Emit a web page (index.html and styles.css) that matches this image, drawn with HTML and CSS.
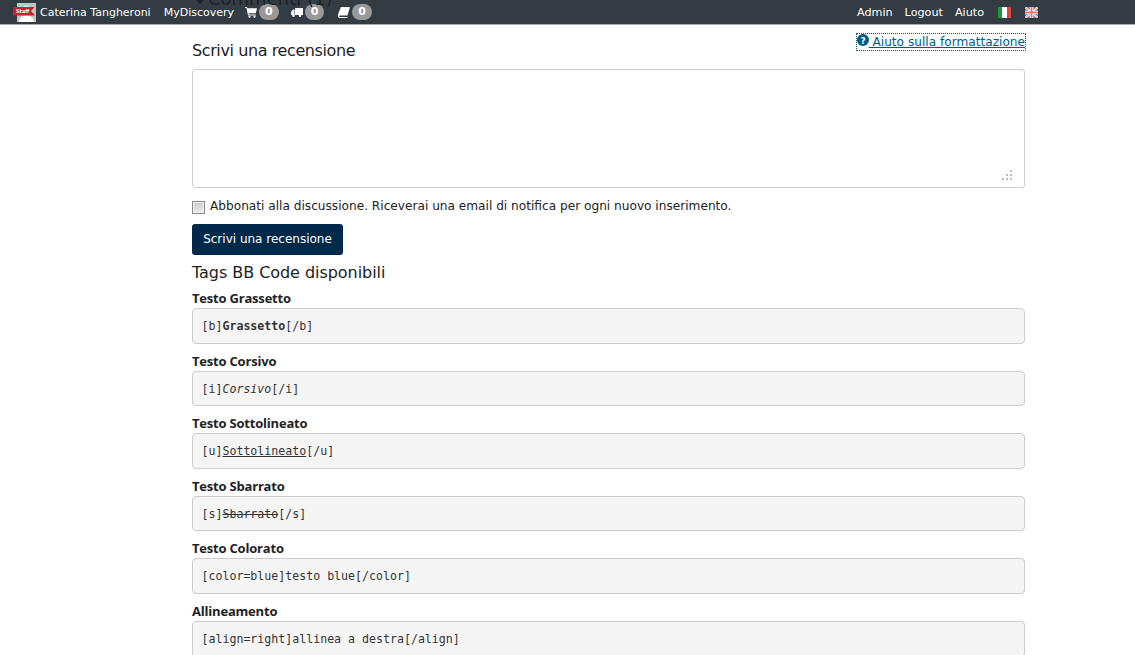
FILE: index.html
```html
<!DOCTYPE html>
<html lang="it">
<head>
<meta charset="utf-8">
<title>Scrivi una recensione</title>
<link rel="stylesheet" href="styles.css">
</head>
<body>
<nav class="topbar">
  <div class="nav-group">
    <span class="avatar">
      <svg width="19" height="19" viewBox="0 0 19 19"><rect width="19" height="19" fill="#c4c4c4"/><circle cx="9.500" cy="7" r="4.500" fill="#e4e4e4"/><path d="M2 19c.5-5 4-6.500 7.500-6.500S16.500 14 17 19z" fill="#fff"/></svg>
      <span class="ribbon"><span class="ribbon-text">Staff</span></span>
    </span>
    <a class="nav-link name">Caterina Tangheroni</a>
    <a class="nav-link discovery">MyDiscovery</a>
    <span class="counter"><svg class="ico" width="12" height="12" viewBox="0 0 12 12"><path d="M0 1h2l.5 1.200H12l-1.200 5H3.500l.3 1.300h7v1H3L1.500 2H0z" fill="#fff"/><circle cx="4.500" cy="10.800" r="1.100" fill="#fff"/><circle cx="9.500" cy="10.800" r="1.100" fill="#fff"/></svg><b class="badge">0</b></span>
    <span class="counter wide"><svg class="ico" width="12" height="12" viewBox="0 0 12 12"><path d="M4 2h8v7H4zM0 6l2-2.500h1.500V9H0z" fill="#fff"/><circle cx="2.500" cy="9.800" r="1.200" fill="#fff"/><circle cx="9" cy="9.800" r="1.200" fill="#fff"/></svg><b class="badge">0</b></span>
    <span class="counter"><svg class="ico" width="12" height="12" viewBox="0 0 12 12"><path d="M3 1h9L9.500 9.500H2c-1 0-1 1.500 0 1.500h7.500l-.3 1H1.500C-.5 12-.3 9 .5 7z" fill="#fff"/></svg><b class="badge">0</b></span>
  </div>
  <div class="nav-group right">
    <a class="nav-link">Admin</a>
    <a class="nav-link">Logout</a>
    <a class="nav-link">Aiuto</a>
    <span class="flag it"><i></i><i></i><i></i></span>
    <svg class="flag-uk" width="13" height="11" viewBox="0 0 13 11"><rect width="13" height="11" fill="#5b7fc4"/><path d="M0 0l13 11M13 0L0 11" stroke="#fff" stroke-width="2"/><path d="M0 0l13 11M13 0L0 11" stroke="#e8776d" stroke-width=".8"/><path d="M6.500 0v11M0 5.500h13" stroke="#fff" stroke-width="3.500"/><path d="M6.500 0v11M0 5.500h13" stroke="#e8776d" stroke-width="1.800"/></svg>
  </div>
</nav>

<main class="content">
  <div class="behind"><span class="caret"></span>Commenti (1)</div>
  <div class="head-row">
    <h2 class="title">Scrivi una recensione</h2>
    <a class="help"><svg width="12" height="12" viewBox="0 0 12 12"><circle cx="6" cy="6" r="6" fill="#005a87"/><text x="6" y="9.500" text-anchor="middle" class="help-q">?</text></svg> Aiuto sulla formattazione</a>
  </div>
  <div class="textarea">
    <svg class="grip" width="12" height="12" viewBox="0 0 12 12"><g fill="#bbb"><rect x="9" y="0" width="2" height="2"/><rect x="5" y="4" width="2" height="2"/><rect x="9" y="4" width="2" height="2"/><rect x="1" y="8" width="2" height="2"/><rect x="5" y="8" width="2" height="2"/><rect x="9" y="8" width="2" height="2"/></g></svg>
  </div>
  <label class="check"><span class="box"></span><span class="check-text">Abbonati alla discussione. Riceverai una email di notifica per ogni nuovo inserimento.</span></label>
  <button class="submit">Scrivi una recensione</button>
  <h3 class="subtitle">Tags BB Code disponibili</h3>

  <p class="tag-label first">Testo Grassetto</p>
  <pre class="code">[b]<strong>Grassetto</strong>[/b]</pre>
  <p class="tag-label">Testo Corsivo</p>
  <pre class="code">[i]<em>Corsivo</em>[/i]</pre>
  <p class="tag-label">Testo Sottolineato</p>
  <pre class="code">[u]<u>Sottolineato</u>[/u]</pre>
  <p class="tag-label">Testo Sbarrato</p>
  <pre class="code">[s]<s>Sbarrato</s>[/s]</pre>
  <p class="tag-label">Testo Colorato</p>
  <pre class="code">[color=blue]testo blue[/color]</pre>
  <p class="tag-label">Allineamento</p>
  <pre class="code">[align=right]allinea a destra[/align]</pre>
</main>
</body>
</html>
```

FILE: styles.css
```css
* { box-sizing: border-box; }
html, body { margin: 0; height: 655px; overflow: hidden; background: #fff; }
body { font-family: "DejaVu Sans", sans-serif; color: #222; font-size: 13px; }
.topbar {
  position: fixed; top: 0; left: 0; right: 0; z-index: 5; height: 25px;
  background: #333c43; border-bottom: 1px solid #aaa;
  display: flex; justify-content: space-between; align-items: center;
  padding: 0 97px 0 17px;
}
.nav-group { display: flex; align-items: center; }
.nav-link { color: #fff; font-size: 11px; margin-right: 11px; white-space: nowrap; }
.name { margin-left: 4px; margin-right: 13px; }
.discovery { margin-right: 11px; }
.avatar { display: block; width: 19px; height: 19px; position: relative; }
.avatar svg { display: block; }
.ribbon { position: absolute; left: -4px; top: 4px; width: 22px; height: 9px; background: #c8202c; clip-path: polygon(0 0, 100% 0, 82% 50%, 100% 100%, 0 100%); display: flex; align-items: center; padding-left: 3px; }
.ribbon-text { color: #fff; font: bold 5px/9px "DejaVu Sans", sans-serif; }
.counter { display: flex; align-items: center; margin-right: 12px; }
.counter.wide { margin-right: 14px; }
.ico { margin-right: 2px; }
.badge { background: #999; color: #fff; font-size: 11px; border-radius: 10px; padding: 0 6px; line-height: 16px; height: 16px; }
.right .nav-link { font-size: 11.2px; margin-right: 12px; }
.flag { display: flex; width: 13px; height: 11px; margin-left: 2px; margin-right: 14px; }
.flag i { flex: 1; }
.flag i:nth-child(1) { background: #1a9a3a; }
.flag i:nth-child(2) { background: #fff; }
.flag i:nth-child(3) { background: #d9493e; }
.content { width: 833px; margin-left: 192px; }
.behind { position: relative; z-index: 6; height: 33px; font-size: 18px; line-height: 20px; margin-top: -11px; margin-bottom: 11px; color: #1d2226; display: flex; align-items: flex-start; }
.caret { width: 0; height: 0; border-left: 7px solid transparent; border-right: 7px solid transparent; border-top: 8px solid #1d2226; margin: 7px 1px 0 1px; }
.head-row { display: flex; justify-content: space-between; align-items: flex-start; height: 36px; }
.title { font-size: 16px; letter-spacing: -.4px; font-weight: 400; margin: 8px 0 0; }
.help { font-size: 12.15px; color: #005a87; text-decoration: underline; outline: 1px dotted #005a87; white-space: nowrap; line-height: 15px; margin-top: 1px; }
.help-q { font: bold 9px "DejaVu Sans", sans-serif; fill: #fff; }
.textarea { height: 119px; border: 1px solid #ccc; border-radius: 3px; position: relative; }
.grip { position: absolute; right: 11px; bottom: 5px; }
.check { display: flex; align-items: center; margin-top: 8px; height: 18px; font-size: 12.15px; }
.check-text { position: relative; top: 1px; }
.box { width: 13px; height: 13px; border: 1px solid #8a8a8a; box-shadow: inset 0 0 0 1px #f2f2f2; background: linear-gradient(#c8c8c8, #efefef); margin-right: 5px; margin-top: 5px; flex: none; }
.submit { display: block; margin-top: 10px; height: 31px; width: 151px; background: #012a4a; color: #fff; border: 0; border-radius: 3px; font: 12px "DejaVu Sans", sans-serif; padding: 0 0 2px; }
.subtitle { font-size: 16px; letter-spacing: -.05px; font-weight: 400; margin: 7px 0 0; line-height: 22px; }
.tag-label { font-family: "Open Sans", sans-serif; font-weight: 700; font-size: 13px; letter-spacing: -.2px; margin: 9px 0 0; line-height: 16px; color: #222; }
.tag-label.first { margin-top: 6px; }
.code { margin: 2px 0 0; height: 35.6px; background: #f5f5f5; border: 1px solid #ccc; border-radius: 4px; padding: 0 8.5px; font: 11.6px/34px "DejaVu Sans Mono", monospace; color: #333; overflow: hidden; }
```
